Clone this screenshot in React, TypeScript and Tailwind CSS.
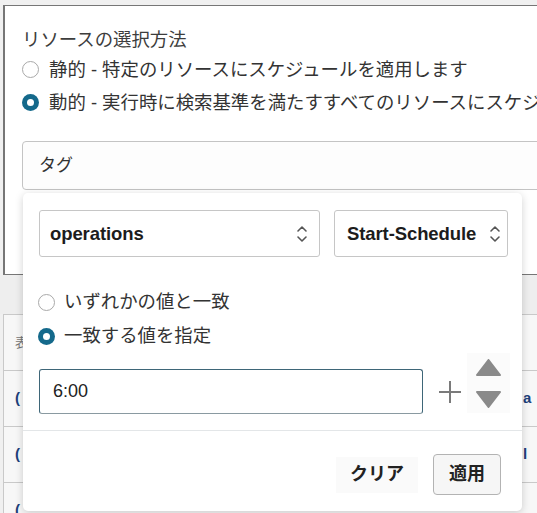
import React from "react";

const font = "font-['Liberation_Sans','Noto_Sans_CJK_JP',sans-serif]";

function Radio({ checked }: { checked?: boolean }) {
  return checked ? (
    <span className="flex h-[17px] w-[17px] shrink-0 items-center justify-center rounded-full bg-[#14698b]">
      <span className="h-[7px] w-[7px] rounded-full bg-white" />
    </span>
  ) : (
    <span className="h-[17px] w-[17px] shrink-0 rounded-full border border-[#a9a9a9] bg-white" />
  );
}

function Chevrons() {
  return (
    <svg width="12" height="20" viewBox="0 0 12 20" fill="none" stroke="#555" strokeWidth="1.6" strokeLinecap="round" strokeLinejoin="round">
      <path d="M2 7 L6 3 L10 7" />
      <path d="M2 13 L6 17 L10 13" />
    </svg>
  );
}

function Select({ value, className }: { value: string; className: string }) {
  return (
    <div className={`flex h-[47px] items-center justify-between rounded-[3px] border border-[#c6c6c6] bg-white ${className}`}>
      <span className="text-[18.5px] font-bold tracking-[-0.1px] text-[#1c1c1c]">{value}</span>
      <Chevrons />
    </div>
  );
}

export default function App() {
  const rows = [
    { left: "表", right: "" },
    { left: "(", right: "a" },
    { left: "(", right: "l" },
    { left: "(", right: "" },
  ];
  return (
    <div className={`relative h-[513px] w-[537px] overflow-hidden bg-[#f0f0f0] ${font}`}>
      {/* panel behind */}
      <div className="ml-[3px] mt-[5px] h-[270px] overflow-hidden border-b-[1.5px] border-l-2 border-t-[1.5px] border-[#767676] bg-white pl-[17px]">
        <div className="mt-[21px] flex h-[26px] items-center text-[18.4px] text-[#3d3d3d]">リソースの選択方法</div>
        <div className="flex h-[33px] items-center gap-[10px] whitespace-nowrap text-[18.4px] text-[#333]">
          <Radio />
          <span>静的 - 特定のリソースにスケジュールを適用します</span>
        </div>
        <div className="flex h-[33px] items-center gap-[10px] whitespace-nowrap text-[18.4px] text-[#333]">
          <Radio checked />
          <span>動的 - 実行時に検索基準を満たすすべてのリソースにスケジュールを適用します</span>
        </div>
        <div className="mt-[22px] flex h-[49px] w-[560px] items-center rounded-[4px] border border-[#c4c4c4] bg-[#fdfdfd] pl-[16px] text-[17px] text-[#333]">
          タグ
        </div>
      </div>

      {/* table behind */}
      <div className="h-[39px] bg-[#eeeeee]" />
      <div className="ml-[3px] border-l border-[#c9c9c9] bg-[#f7f7f7]">
        {rows.map((r, i) => (
          <div key={i} className="flex h-[56px] items-center justify-between border-t border-[#c9c9c9] pl-[11px]">
            <span className={i === 0 ? "text-[13px] text-[#777]" : "text-[15px] font-bold text-[#20407a]"}>{r.left}</span>
            <span className="w-[14px] overflow-hidden text-[15px] font-bold text-[#20407a]">{r.right}</span>
          </div>
        ))}
      </div>

      {/* popup */}
      <div className="absolute left-[23px] top-[193px] flex h-[318px] w-[499px] flex-col rounded-[5px] bg-white shadow-[0_2px_8px_rgba(0,0,0,0.18)]">
        <div className="flex gap-[14px] pl-[16px] pt-[17px]">
          <Select value="operations" className="w-[281px] pl-[10px] pr-[11px]" />
          <Select value="Start-Schedule" className="w-[174px] pl-[12px] pr-[6px]" />
        </div>

        <div className="mt-[28px] pl-[15px]">
          <div className="flex h-[34px] items-center gap-[9px] text-[18.4px] text-[#333]">
            <Radio />
            <span>いずれかの値と一致</span>
          </div>
          <div className="flex h-[34px] items-center gap-[9px] text-[18.4px] text-[#333]">
            <Radio checked />
            <span>一致する値を指定</span>
          </div>
        </div>

        <div className="mt-[16px] flex h-[45px] items-start pl-[16px]">
          <div className="flex h-[45px] w-[384px] items-center rounded-[3px] border border-[#3e6678] border-b-[#8a9aa1] bg-white pl-[13px] text-[18px] text-[#222]">
            6:00
          </div>
          <svg className="ml-[15px] mt-[11px]" width="24" height="24" viewBox="0 0 24 24" stroke="#7a7a7a" strokeWidth="2">
            <path d="M12 1 V23 M1 12 H23" />
          </svg>
          <div className="-mt-[16px] ml-[5px] flex h-[60px] w-[43px] flex-col items-center justify-center gap-[15px] bg-[#fbfbfb]">
            <svg width="25" height="17" viewBox="0 0 25 17">
              <path d="M12.5 1 L24 16 H1 Z" fill="#8a8a8a" stroke="#8a8a8a" strokeLinejoin="round" strokeWidth="2" />
            </svg>
            <svg width="25" height="17" viewBox="0 0 25 17">
              <path d="M12.5 16 L24 1 H1 Z" fill="#8a8a8a" stroke="#8a8a8a" strokeLinejoin="round" strokeWidth="2" />
            </svg>
          </div>
        </div>

        <div className="mt-[16px] border-t border-[#e3e6e8]" />

        <div className="flex items-center justify-end gap-[15px] pr-[21px] pt-[23px]">
          <button className="flex h-[36px] w-[82px] items-center justify-center bg-[#fafafa] text-[18px] font-bold text-[#222]">
            クリア
          </button>
          <button className="flex h-[41px] w-[68px] items-center justify-center rounded-[4px] border border-[#b3b3b3] bg-[#f6f6f6] text-[18px] font-bold text-[#222]">
            適用
          </button>
        </div>
      </div>
    </div>
  );
}
